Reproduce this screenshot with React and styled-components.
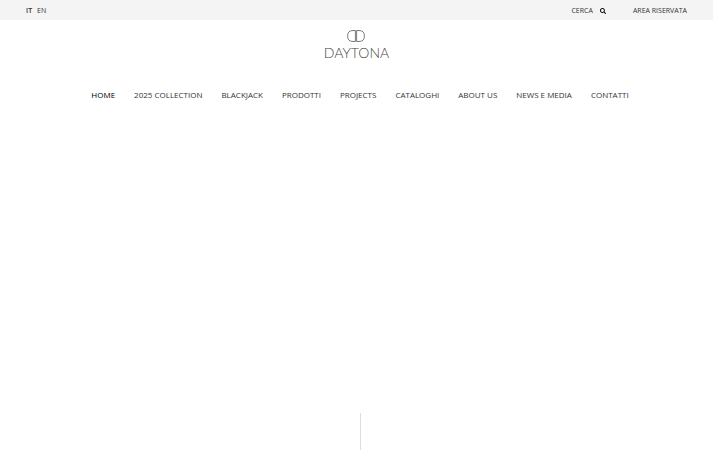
import styled, { createGlobalStyle } from "styled-components"
import { FaSearch } from "react-icons/fa";

const EstiloGlobal = createGlobalStyle`
    * {
        box-sizing: border-box;
        margin: 0;
        padding: 0;
    }
    body {
        background: #fff;
        color: #333;
        font-family: "Open Sans", "Liberation Sans", sans-serif;
    }
    a {
        color: inherit;
        text-decoration: none;
    }
`

const Pagina = styled.div`
    display: flex;
    flex-direction: column;
    min-height: 100vh;
`

// TOPO
const Topo = styled.div`
    display: flex;
    justify-content: space-between;
    align-items: center;
    height: 20px;
    margin-right: 7px;
    padding: 2px 26px 0;
    background: #f4f4f4;
    font-size: 7px;
    line-height: 8px;
`
const Idiomas = styled.div`
    display: flex;
    gap: 5px;
`
const IdiomaLink = styled.a`
    font-weight: ${({ $ativo }) => ($ativo ? 600 : 400)};
`
const TopoDireita = styled.div`
    display: flex;
    align-items: center;
    gap: 27px;
`
const BotaoBusca = styled.button`
    display: flex;
    align-items: center;
    gap: 7px;
    border: 0;
    background: none;
    color: inherit;
    font: inherit;
    cursor: pointer;

    svg {
        color: #000;
    }
`

// CABECALHO
const Cabecalho = styled.header`
    display: flex;
    flex-direction: column;
    align-items: center;
    padding-top: 9px;
`
const Logo = styled.a`
    display: flex;
    flex-direction: column;
    align-items: center;
    gap: 1px;
    margin-right: 7px;
    color: #444;
`
const LogoNome = styled.span`
    font-family: Lato, sans-serif;
    font-size: 14px;
    font-weight: 300;
    line-height: 18px;
`
const Menu = styled.nav`
    display: flex;
    justify-content: center;
    gap: 19px;
    margin-top: 28px;
    font-size: 8px;
    line-height: 10px;
    white-space: nowrap;
`
const MenuLink = styled.a`
    color: ${({ $ativo }) => ($ativo ? "#000" : "#333")};
`

// CONTEUDO
const Conteudo = styled.main`
    display: flex;
    flex: 1;
    justify-content: center;
    align-items: flex-end;
`
const LinhaRolagem = styled.div`
    width: 1px;
    height: 37px;
    background: #ddd;
`

const itensMenu = [
    "HOME",
    "2025 COLLECTION",
    "BLACKJACK",
    "PRODOTTI",
    "PROJECTS",
    "CATALOGHI",
    "ABOUT US",
    "NEWS E MEDIA",
    "CONTATTI",
]

function App() {
    return (
        <Pagina>
            <EstiloGlobal />
            <Topo>
                <Idiomas>
                    <IdiomaLink href="#" $ativo>IT</IdiomaLink>
                    <IdiomaLink href="#">EN</IdiomaLink>
                </Idiomas>
                <TopoDireita>
                    <BotaoBusca type="button">
                        CERCA
                        <FaSearch size={6} />
                    </BotaoBusca>
                    <a href="#">AREA RISERVATA</a>
                </TopoDireita>
            </Topo>

            <Cabecalho>
                <Logo href="#">
                    <svg width="18" height="14" viewBox="0 0 18 14" fill="none" stroke="currentColor" strokeWidth="0.7" aria-hidden="true">
                        <path d="M8.4 1.5H6Q.6 1.5 .6 7T6 12.5H8.4Z" />
                        <path d="M9.6 1.5H12Q17.4 1.5 17.4 7T12 12.5H9.6Z" />
                    </svg>
                    <LogoNome>DAYTONA</LogoNome>
                </Logo>
                <Menu>
                    {itensMenu.map((item, i) => (
                        <MenuLink key={item} href="#" $ativo={i === 0}>{item}</MenuLink>
                    ))}
                </Menu>
            </Cabecalho>

            <Conteudo>
                <LinhaRolagem />
            </Conteudo>
        </Pagina>
    )
}

export default App
